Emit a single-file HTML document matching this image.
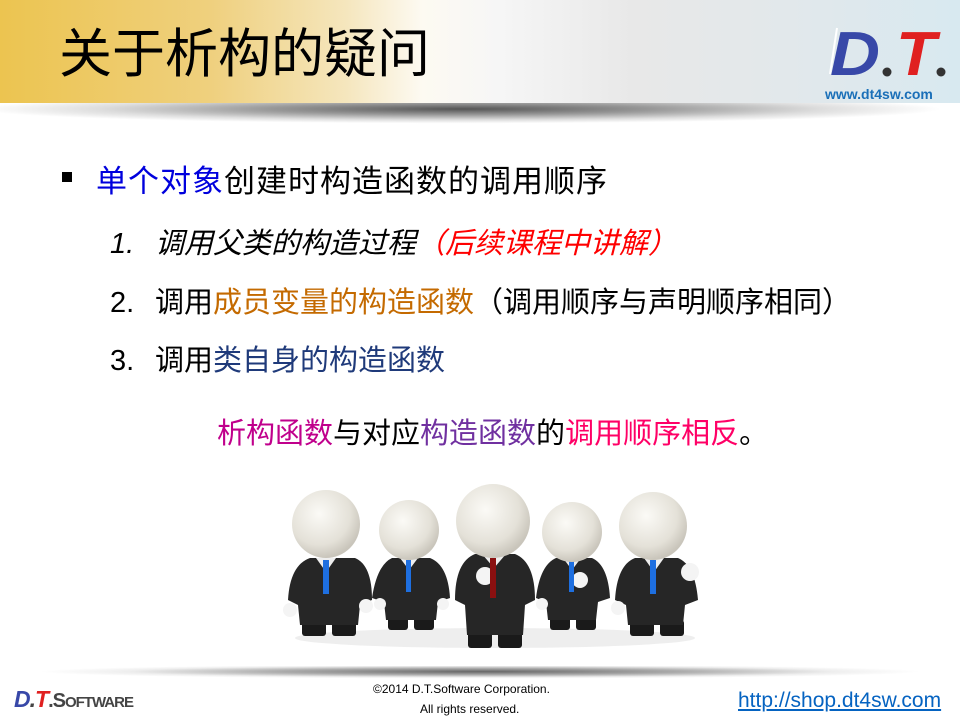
<!DOCTYPE html>
<html><head><meta charset="utf-8"><style>
*{margin:0;padding:0}
body{width:960px;height:720px;position:relative;overflow:hidden;background:#fff;font-family:"Liberation Sans","Noto Sans CJK SC",sans-serif}
.hdr{position:absolute;left:0;top:0;width:960px;height:103px;background:linear-gradient(90deg,#ecc450 0%,#efd07e 22%,#f5e6bd 36%,#fdfaf2 44%,#f6f6f6 52%,#e8e8e8 66%,#e2e8eb 82%,#d8e9f0 100%)}
.sh{position:absolute;left:0;top:103px;width:960px;height:24px;background:radial-gradient(ellipse 50% 60% at 48% 25%,#555 0%,#999 40%,#ddd 75%,#fff 100%)}
.title{position:absolute;left:59px;top:18px;font-size:53px;color:#000;font-family:"Noto Sans CJK SC",sans-serif;line-height:64px}
.t{position:absolute;white-space:nowrap;font-family:"Noto Sans CJK SC",sans-serif;line-height:40px}
.n{font-family:"Liberation Sans";display:inline-block;width:45px}
.fsh{position:absolute;left:40px;top:666px;width:880px;height:14px;background:radial-gradient(ellipse 50% 50% at 50% 40%,#666 0%,#aaa 45%,#eee 80%,#fff 100%)}
</style></head><body>
<div class="hdr"></div><div class="sh"></div>
<div class="title">关于析构的疑问</div>
<svg style="position:absolute;left:826px;top:22px" width="126" height="60">
<text x="4" y="53" font-family="Liberation Sans" font-weight="bold" font-style="italic" font-size="62" fill="#3848a8" textLength="50" lengthAdjust="spacingAndGlyphs">D</text>
<line x1="11" y1="6" x2="4" y2="52" stroke="#fff" stroke-width="2"/>
<circle cx="61" cy="50" r="4.5" fill="#333"/>
<text x="70" y="53" font-family="Liberation Sans" font-weight="bold" font-style="italic" font-size="62" fill="#e02020" textLength="40" lengthAdjust="spacingAndGlyphs">T</text>
<circle cx="115" cy="50" r="4.5" fill="#333"/>
</svg>
<div style="position:absolute;left:825px;top:86px;font-size:14px;font-weight:bold;color:#1a6fb8">www.dt4sw.com</div>

<div style="position:absolute;left:62px;top:172px;width:10px;height:10px;background:#000"></div>
<div class="t" style="left:96px;top:159px;font-size:31px;letter-spacing:1px"><span style="color:#0000dd">单个对象</span>创建时构造函数的调用顺序</div>
<div class="t" style="left:110px;top:221px;font-size:29px;font-style:italic"><span class="n">1.</span>调用父类的构造过程<span style="color:#f00">（后续课程中讲解）</span></div>
<div class="t" style="left:110px;top:280px;font-size:29px"><span class="n">2.</span>调用<span style="color:#c46a00">成员变量的构造函数</span>（调用顺序与声明顺序相同）</div>
<div class="t" style="left:110px;top:338px;font-size:29px"><span class="n">3.</span>调用<span style="color:#1f3a7a">类自身的构造函数</span></div>
<div class="t" style="left:217px;top:411px;font-size:29px"><span style="color:#c0008c">析构函数</span>与对应<span style="color:#7030a0">构造函数</span>的<span style="color:#ff0066">调用顺序相反</span>。</div>

<svg style="position:absolute;left:280px;top:480px" width="430" height="170">
<defs><radialGradient id="h" cx="40%" cy="35%" r="65%"><stop offset="0" stop-color="#fbfaf6"/><stop offset="0.7" stop-color="#e4e1d8"/><stop offset="1" stop-color="#c9c5bb"/></radialGradient></defs>
<ellipse cx="215" cy="158" rx="200" ry="10" fill="#eee"/>
<g fill="#1a1a1a">
<rect x="22" y="140" width="24" height="16" rx="3"/><rect x="52" y="140" width="24" height="16" rx="3"/>
<rect x="108" y="136" width="20" height="14" rx="3"/><rect x="134" y="136" width="20" height="14" rx="3"/>
<rect x="188" y="150" width="24" height="18" rx="3"/><rect x="218" y="150" width="24" height="18" rx="3"/>
<rect x="270" y="136" width="20" height="14" rx="3"/><rect x="296" y="136" width="20" height="14" rx="3"/>
<rect x="350" y="140" width="24" height="16" rx="3"/><rect x="380" y="140" width="24" height="16" rx="3"/>
</g>
<g fill="#262626">
<path d="M8 120 Q10 85 30 78 L75 78 Q92 85 92 120 L80 125 L78 145 L20 145 L18 125Z"/>
<path d="M92 118 Q97 85 112 78 L150 78 Q168 85 170 118 L158 122 L156 140 L106 140 L104 122Z"/>
<path d="M175 120 Q175 82 195 74 L235 74 Q255 82 255 120 L245 125 L243 155 L187 155 L185 125Z"/>
<path d="M256 118 Q260 85 276 78 L312 78 Q328 85 330 118 L318 122 L316 140 L268 140 L266 122Z"/>
<path d="M335 120 Q337 85 355 78 L398 78 Q415 85 418 120 L405 125 L403 145 L348 145 L346 125Z"/>
</g>
<g fill="#eee"><path d="M36 78 L56 78 L46 92Z"/><path d="M120 78 L138 78 L129 90Z"/><path d="M202 74 L226 74 L214 88Z"/><path d="M283 78 L301 78 L292 90Z"/><path d="M364 78 L384 78 L374 92Z"/></g>
<g fill="#f4f4f4"><circle cx="10" cy="130" r="7"/><circle cx="86" cy="126" r="7"/><circle cx="100" cy="124" r="6"/><circle cx="163" cy="124" r="6"/><circle cx="205" cy="96" r="9"/><circle cx="262" cy="124" r="6"/><circle cx="300" cy="100" r="8"/><circle cx="338" cy="128" r="7"/><circle cx="410" cy="92" r="9"/></g>
<g fill="#1e6fe0"><rect x="43" y="80" width="6" height="34"/><rect x="126" y="80" width="5" height="32"/><rect x="289" y="80" width="5" height="32"/><rect x="370" y="80" width="6" height="34"/></g>
<rect x="210" y="78" width="6" height="40" fill="#8a1010"/>
<g fill="url(#h)">
<circle cx="46" cy="44" r="34"/><circle cx="129" cy="50" r="30"/><circle cx="213" cy="41" r="37"/><circle cx="292" cy="52" r="30"/><circle cx="373" cy="46" r="34"/>
</g>
</svg>

<div class="fsh"></div>
<div style="position:absolute;left:14px;top:686px;font-size:23px;font-weight:bold;font-style:italic;color:#3848a8;letter-spacing:-1px">D<span style="color:#444">.</span><span style="color:#e02020">T</span><span style="color:#444;font-style:normal;font-size:20px">.S<span style="font-size:15px">OFTWARE</span></span></div>
<div style="position:absolute;left:373px;top:679px;width:200px;font-size:12px;color:#000;line-height:20px">©2014 D.T.Software Corporation.<br><span style="margin-left:47px">All rights reserved.</span></div>
<div style="position:absolute;left:738px;top:689px;font-size:21px;color:#0563c1;text-decoration:underline">http://shop.dt4sw.com</div>
</body></html>
